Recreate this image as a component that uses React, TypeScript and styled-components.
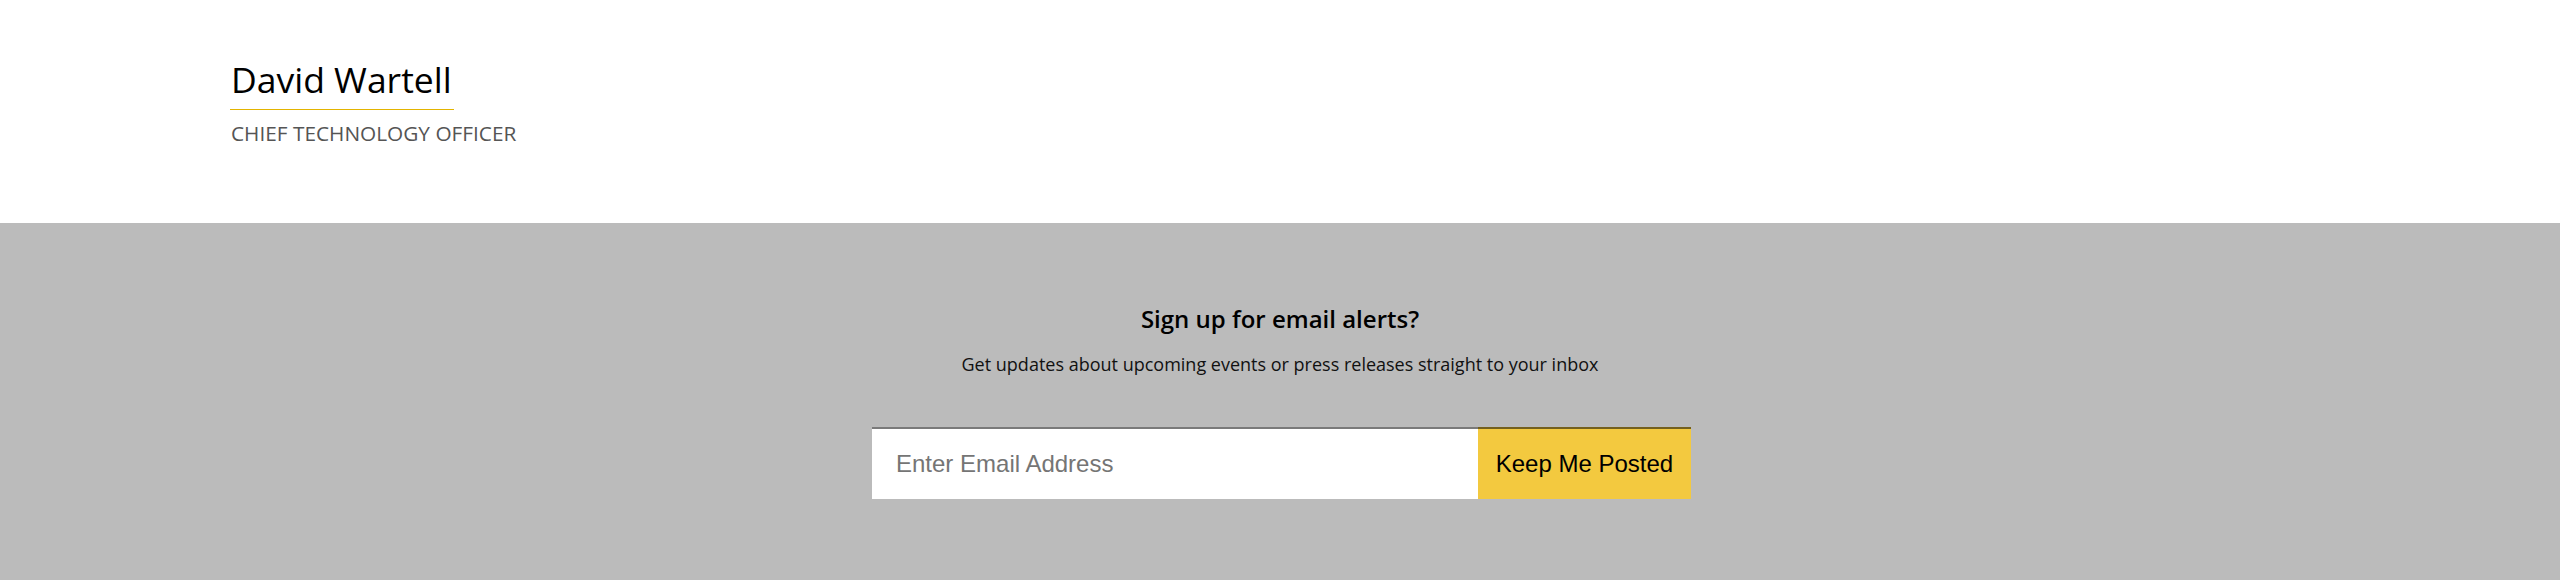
import React from "react";
import styled, { createGlobalStyle } from "styled-components";

const Global = createGlobalStyle`
  html, body { margin: 0; padding: 0; background: #ffffff; }
  body { font-family: "Open Sans", "Liberation Sans", sans-serif; }
  * { box-sizing: border-box; }
`;

const Page = styled.div`
  display: flex;
  flex-direction: column;
  min-height: 580px;
`;

const Profile = styled.section`
  height: 223px;
  padding: 58px 0 0 231px;
  background: #ffffff;
  display: flex;
  flex-direction: column;
  align-items: flex-start;
`;

const Name = styled.h1`
  margin: 0 0 0 -1px;
  font-family: "Open Sans", sans-serif;
  font-weight: 400;
  font-size: 35.5px;
  line-height: 1.2;
  color: #000000;
  padding: 0 2px 8px 1px;
  border-bottom: 1px solid #e3b400;
`;

const Role = styled.p`
  margin: 11px 0 0;
  font-family: "Open Sans", sans-serif;
  font-weight: 400;
  font-size: 20.8px;
  line-height: 1.2;
  color: #555555;
  text-transform: uppercase;
`;

const Signup = styled.section`
  flex: 1;
  background: #bbbbbb;
  padding: 82px 0 80px;
  display: flex;
  flex-direction: column;
  align-items: center;
`;

const Heading = styled.h2`
  margin: 0;
  font-family: "Open Sans", sans-serif;
  font-weight: 600;
  font-size: 24px;
  line-height: 1.2;
  color: #000000;
`;

const Lead = styled.p`
  margin: 20px 0 0;
  font-family: "Open Sans", sans-serif;
  font-weight: 400;
  font-size: 18px;
  line-height: 1.2;
  color: #111111;
`;

const Form = styled.form`
  margin: 52px 0 0 3px;
  display: flex;
  width: 819px;
  height: 72px;
`;

const EmailInput = styled.input`
  flex: 1;
  min-width: 0;
  height: 100%;
  border: none;
  border-top: 2px solid rgba(0, 0, 0, 0.52);
  background: #ffffff;
  padding: 0 24px;
  font-family: "Liberation Sans", Arial, sans-serif;
  font-size: 24px;
  color: #222;
  outline: none;
  &::placeholder { color: #757575; }
`;

const Submit = styled.button`
  width: 213px;
  height: 100%;
  border: none;
  border-top: 2px solid rgba(0, 0, 0, 0.52);
  background: #f3c93f;
  padding: 0;
  font-family: "Liberation Sans", Arial, sans-serif;
  font-size: 24px;
  color: #000000;
  cursor: pointer;
`;

export default function App() {
  return (
    <Page>
      <Global />
      <Profile>
        <Name>David Wartell</Name>
        <Role>Chief Technology Officer</Role>
      </Profile>
      <Signup>
        <Heading>Sign up for email alerts?</Heading>
        <Lead>Get updates about upcoming events or press releases straight to your inbox</Lead>
        <Form onSubmit={(e) => e.preventDefault()}>
          <EmailInput type="email" placeholder="Enter Email Address" />
          <Submit type="submit">Keep Me Posted</Submit>
        </Form>
      </Signup>
    </Page>
  );
}
